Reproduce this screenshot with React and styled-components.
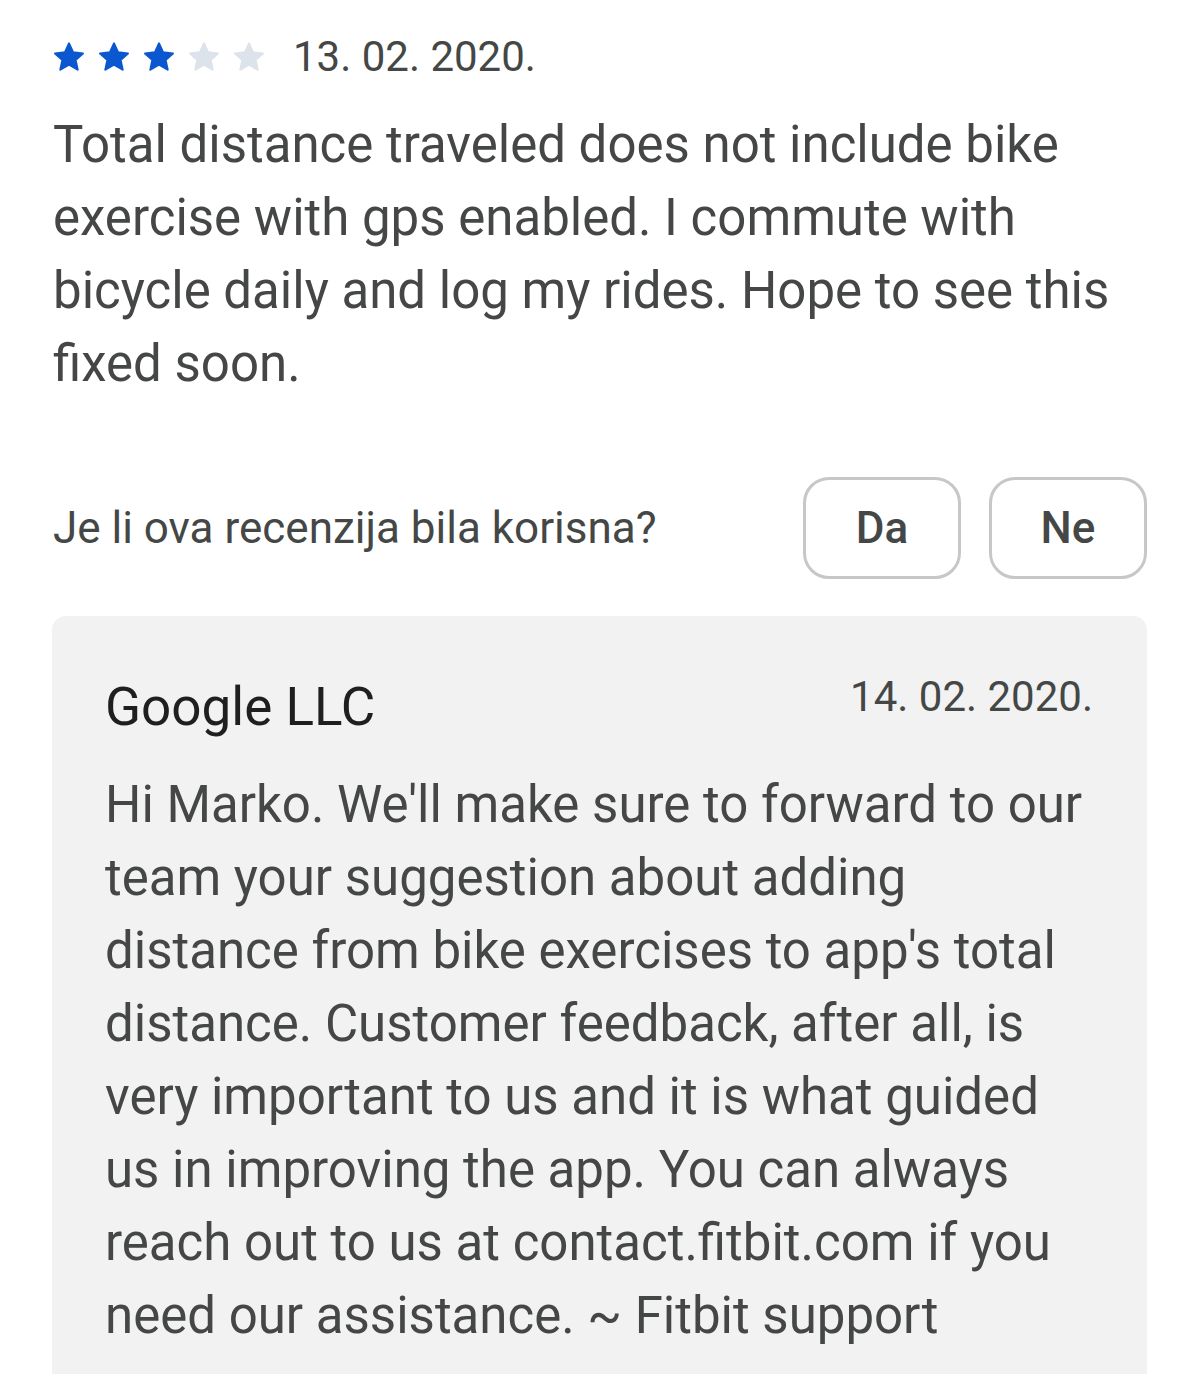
import React from "react";
import styled, { createGlobalStyle } from "styled-components";

const Global = createGlobalStyle`
  html, body { margin: 0; padding: 0; background: #fff; }
  body { font-family: Roboto, "Noto Sans", sans-serif; -webkit-font-smoothing: antialiased; }
  #root { overflow: hidden; height: 1374px; }
`;

const Page = styled.div`
  padding: 30px 52px 0 53px;
  box-sizing: border-box;
  width: 1199px;
`;

const Header = styled.div`
  display: flex;
  align-items: center;
  gap: 28px;
  height: 52px;
`;

const Stars = styled.div`
  display: flex;
  gap: 13px;
`;

const StarIcon = styled.svg`
  display: block;
  width: 32px;
  height: 31px;
`;

const DateText = styled.span`
  font-size: 42px;
  color: #444746;
`;

const Body = styled.p`
  margin: 26px 0 0;
  font-size: 51px;
  line-height: 73px;
  color: #444746;
  white-space: nowrap;
`;

const HelpRow = styled.div`
  display: flex;
  align-items: center;
  justify-content: space-between;
  margin-top: 77px;
`;

const HelpLabel = styled.span`
  font-size: 44px;
  color: #444746;
`;

const Buttons = styled.div`
  display: flex;
  gap: 28px;
`;

const Btn = styled.button`
  width: 158px;
  height: 102px;
  box-sizing: border-box;
  border: 3px solid #c7c7c7;
  border-radius: 26px;
  background: #fff;
  font-family: Roboto, sans-serif;
  font-size: 44px;
  font-weight: 500;
  color: #444746;
  padding: 0;
`;

const Reply = styled.div`
  margin-top: 37px;
  background: #f2f2f2;
  border-radius: 14px 14px 0 0;
  padding: 50px 54px 40px 53px;
  margin-left: -1px;
`;

const ReplyHead = styled.div`
  display: flex;
  justify-content: space-between;
  align-items: flex-start;
`;

const Dev = styled.span`
  font-size: 53px;
  color: #1f1f1f;
  line-height: 82px;
`;

const ReplyDate = styled.span`
  font-size: 42px;
  color: #444746;
  line-height: 62px;
`;

const ReplyText = styled.p`
  margin: 20px 0 0;
  font-size: 51px;
  line-height: 73px;
  color: #444746;
  white-space: nowrap;
`;

const Star = ({ filled }) => {
  const c = filled ? "#0b57d0" : "#dde3ea";
  return (
    <StarIcon viewBox="1.1 1.4 21.8 20.2">
      <path
        d="M12 2.6l2.8 6.1 6.7.7-5 4.5 1.4 6.6L12 17.1l-5.9 3.4 1.4-6.6-5-4.5 6.7-.7z"
        fill={c}
        stroke={c}
        strokeWidth="1.4"
        strokeLinejoin="round"
      />
    </StarIcon>
  );
};

const reviewLines = [
  "Total distance traveled does not include bike",
  "exercise with gps enabled. I commute with",
  "bicycle daily and log my rides. Hope to see this",
  "fixed soon.",
];

const replyLines = [
  "Hi Marko. We'll make sure to forward to our",
  "team your suggestion about adding",
  "distance from bike exercises to app's total",
  "distance. Customer feedback, after all, is",
  "very important to us and it is what guided",
  "us in improving the app. You can always",
  "reach out to us at contact.fitbit.com if you",
  "need our assistance. ~ Fitbit support",
];

const Lines = ({ lines }) =>
  lines.map((l, i) => (
    <React.Fragment key={i}>
      {l}
      {i < lines.length - 1 && <br />}
    </React.Fragment>
  ));

export default function App() {
  return (
    <>
      <Global />
      <Page>
        <Header>
          <Stars>
            {[1, 2, 3, 4, 5].map((i) => (
              <Star key={i} filled={i <= 3} />
            ))}
          </Stars>
          <DateText>13. 02. 2020.</DateText>
        </Header>
        <Body>
          <Lines lines={reviewLines} />
        </Body>
        <HelpRow>
          <HelpLabel>Je li ova recenzija bila korisna?</HelpLabel>
          <Buttons>
            <Btn>Da</Btn>
            <Btn>Ne</Btn>
          </Buttons>
        </HelpRow>
        <Reply>
          <ReplyHead>
            <Dev>Google LLC</Dev>
            <ReplyDate>14. 02. 2020.</ReplyDate>
          </ReplyHead>
          <ReplyText>
            <Lines lines={replyLines} />
          </ReplyText>
        </Reply>
      </Page>
    </>
  );
}
